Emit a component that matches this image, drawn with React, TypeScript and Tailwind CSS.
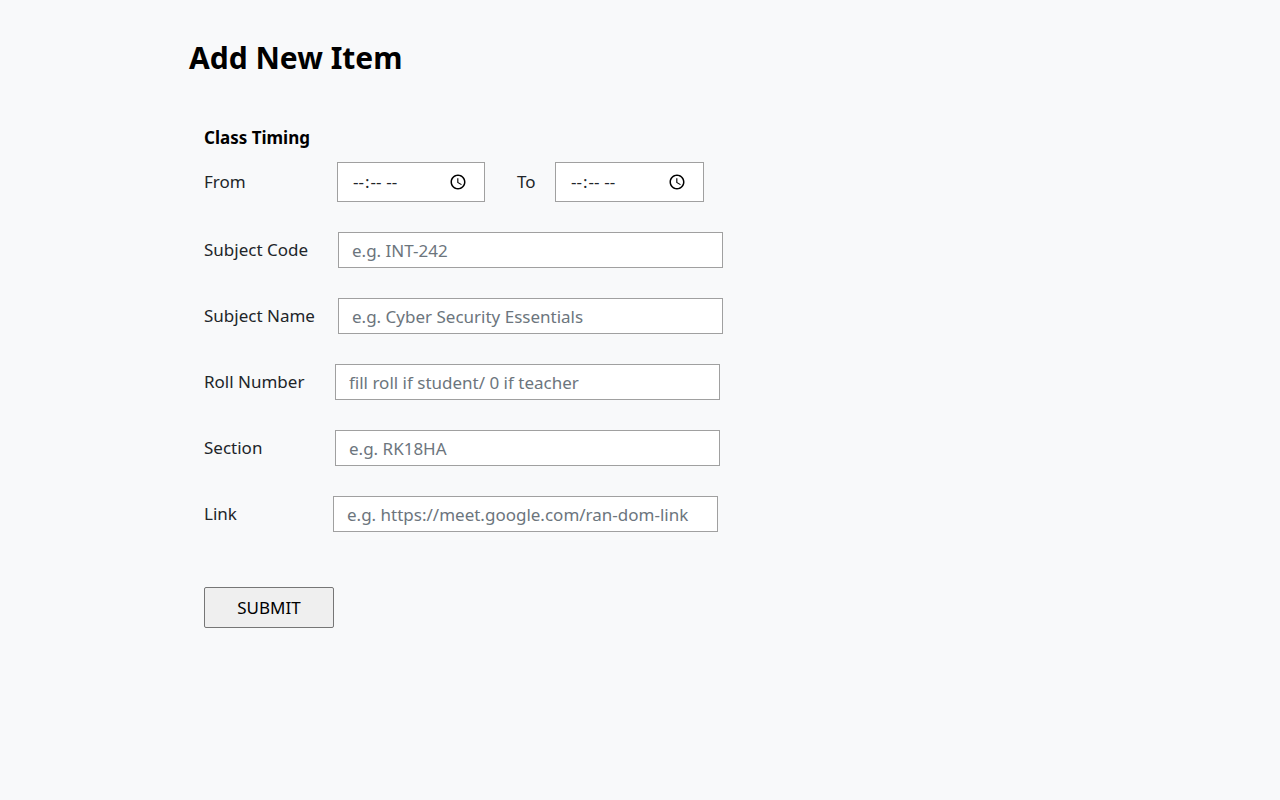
export default function App() {
  const rows = [
    { label: 'Subject Code', ph: 'e.g. INT-242', lw: 'w-[134px]', iw: 'w-[385px]' },
    { label: 'Subject Name', ph: 'e.g. Cyber Security Essentials', lw: 'w-[134px]', iw: 'w-[385px]' },
    { label: 'Roll Number', ph: 'fill roll if student/ 0 if teacher', lw: 'w-[131px]', iw: 'w-[385px]' },
    { label: 'Section', ph: 'e.g. RK18HA', lw: 'w-[131px]', iw: 'w-[385px]' },
    { label: 'Link', ph: 'e.g. https://meet.google.com/ran-dom-link', lw: 'w-[129px]', iw: 'w-[385px]' },
  ];
  return (
    <div className="min-h-[800px] bg-[#f8f9fa] text-[#212529] font-['Liberation_Sans',Arial,sans-serif]">
      <div className="pl-[189px] pt-[40px]">
        <h1 className="text-[30px] font-bold leading-[36px] text-black">Add New Item</h1>
        <form className="pl-[15px] pt-[50px]">
          <div className="text-[17px] font-bold leading-[24px] text-black">Class Timing</div>
          <div className="flex items-center mt-[12px] text-[17px]">
            <span className="w-[133px]">From</span>
            <input type="time" className="w-[148px] h-[40px] border border-[#a0a0a0] bg-white px-[14px] text-[17px]" />
            <span className="w-[70px] pl-[32px]">To</span>
            <input type="time" className="w-[149px] h-[40px] border border-[#a0a0a0] bg-white px-[14px] text-[17px]" />
          </div>
          {rows.map((r) => (
            <div key={r.label} className="flex items-center mt-[30px] first:mt-[30px] text-[17px]">
              <span className={r.lw}>{r.label}</span>
              <input
                placeholder={r.ph}
                className={`${r.iw} h-[36px] border border-[#a0a0a0] bg-white px-[13px] text-[17px] placeholder:text-[#6c757d] outline-none`}
              />
            </div>
          ))}
          <button
            type="button"
            className="mt-[55px] w-[130px] h-[41px] border border-[#767676] rounded-[2px] bg-[#efefef] text-[17px] text-black"
          >
            SUBMIT
          </button>
        </form>
      </div>
    </div>
  );
}
